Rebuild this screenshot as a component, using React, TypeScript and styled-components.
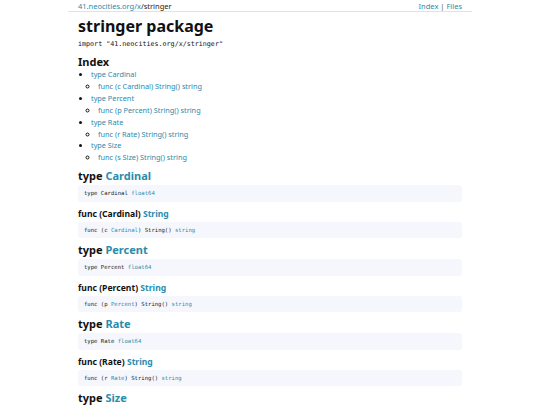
import styled, { createGlobalStyle } from 'styled-components'

const GlobalStyle = createGlobalStyle`
  body {
    margin: 0;
    background: #ffffff;
    font-family: "Noto Sans", sans-serif;
    color: #111111;
  }
`

const Page = styled.div`
  width: 404px;
  margin: 0 auto;
`

const TopBar = styled.header`
  display: flex;
  justify-content: space-between;
  align-items: center;
  height: 11px;
  padding: 0 10px;
  font-size: 7.5px;
  border-bottom: 1px solid #e2e2e2;
`

const Crumbs = styled.div`
  color: #222;
`

const NavLinks = styled.div`
  color: #555;
`

const Link = styled.a`
  color: #2b8aac;
  text-decoration: none;
`

const Content = styled.main`
  padding: 0 10px;
`

const Title = styled.h1`
  margin: 4px 0 0;
  font-size: 16px;
  font-weight: 700;
  line-height: 20px;
`

const ImportLine = styled.div`
  margin-top: 3px;
  font-family: "DejaVu Sans Mono", monospace;
  font-size: 6.7px;
  line-height: 10px;
`

const IndexTitle = styled.h2`
  margin: 6px 0 0;
  font-size: 11px;
  font-weight: 700;
  line-height: 14px;
`

const IndexList = styled.ul`
  margin: 0;
  padding-left: 13px;
  font-size: 7.3px;
  line-height: 11.9px;
  list-style: disc;
`

const SubList = styled.ul`
  margin: 0;
  padding-left: 7px;
  list-style: circle;
`

const TypeHeading = styled.h2`
  margin: 5px 0 0;
  font-size: 11px;
  font-weight: 700;
  line-height: 14px;
`

const FuncHeading = styled.h3`
  margin: 6px 0 0;
  font-size: 8.6px;
  font-weight: 700;
  line-height: 12px;
`

const Name = styled.span`
  color: #2a8cab;
`

const Code = styled.pre`
  margin: 2px 0 0;
  padding: 4px 6px 4.5px;
  background: #f5f7fd;
  border-radius: 3px;
  font-family: "DejaVu Sans Mono", monospace;
  font-size: 5.6px;
  line-height: 8px;
  color: #222;
`

const items = [
  { type: 'Cardinal', recv: 'c' },
  { type: 'Percent', recv: 'p' },
  { type: 'Rate', recv: 'r' },
  { type: 'Size', recv: 's' },
]

export default function App() {
  return (
    <>
      <GlobalStyle />
      <Page>
        <TopBar>
          <Crumbs>
            <Link href="#">41.neocities.org/</Link>
            <Link href="#">x</Link>/stringer
          </Crumbs>
          <NavLinks>
            <Link href="#">Index</Link> | <Link href="#">Files</Link>
          </NavLinks>
        </TopBar>
        <Content>
          <Title>stringer package</Title>
          <ImportLine>import "41.neocities.org/x/stringer"</ImportLine>
          <IndexTitle>Index</IndexTitle>
          <IndexList>
            {items.map(it => (
              <li key={it.type}>
                <Link href="#">type {it.type}</Link>
                <SubList>
                  <li>
                    <Link href="#">func ({it.recv} {it.type}) String() string</Link>
                  </li>
                </SubList>
              </li>
            ))}
          </IndexList>
          {items.map(it => (
            <section key={it.type}>
              <TypeHeading>
                type <Name>{it.type}</Name>
              </TypeHeading>
              <Code>
                type {it.type} <Name>float64</Name>
              </Code>
              <FuncHeading>
                func ({it.type}) <Name>String</Name>
              </FuncHeading>
              <Code>
                func ({it.recv} <Name>{it.type}</Name>) String() <Name>string</Name>
              </Code>
            </section>
          ))}
        </Content>
      </Page>
    </>
  )
}
